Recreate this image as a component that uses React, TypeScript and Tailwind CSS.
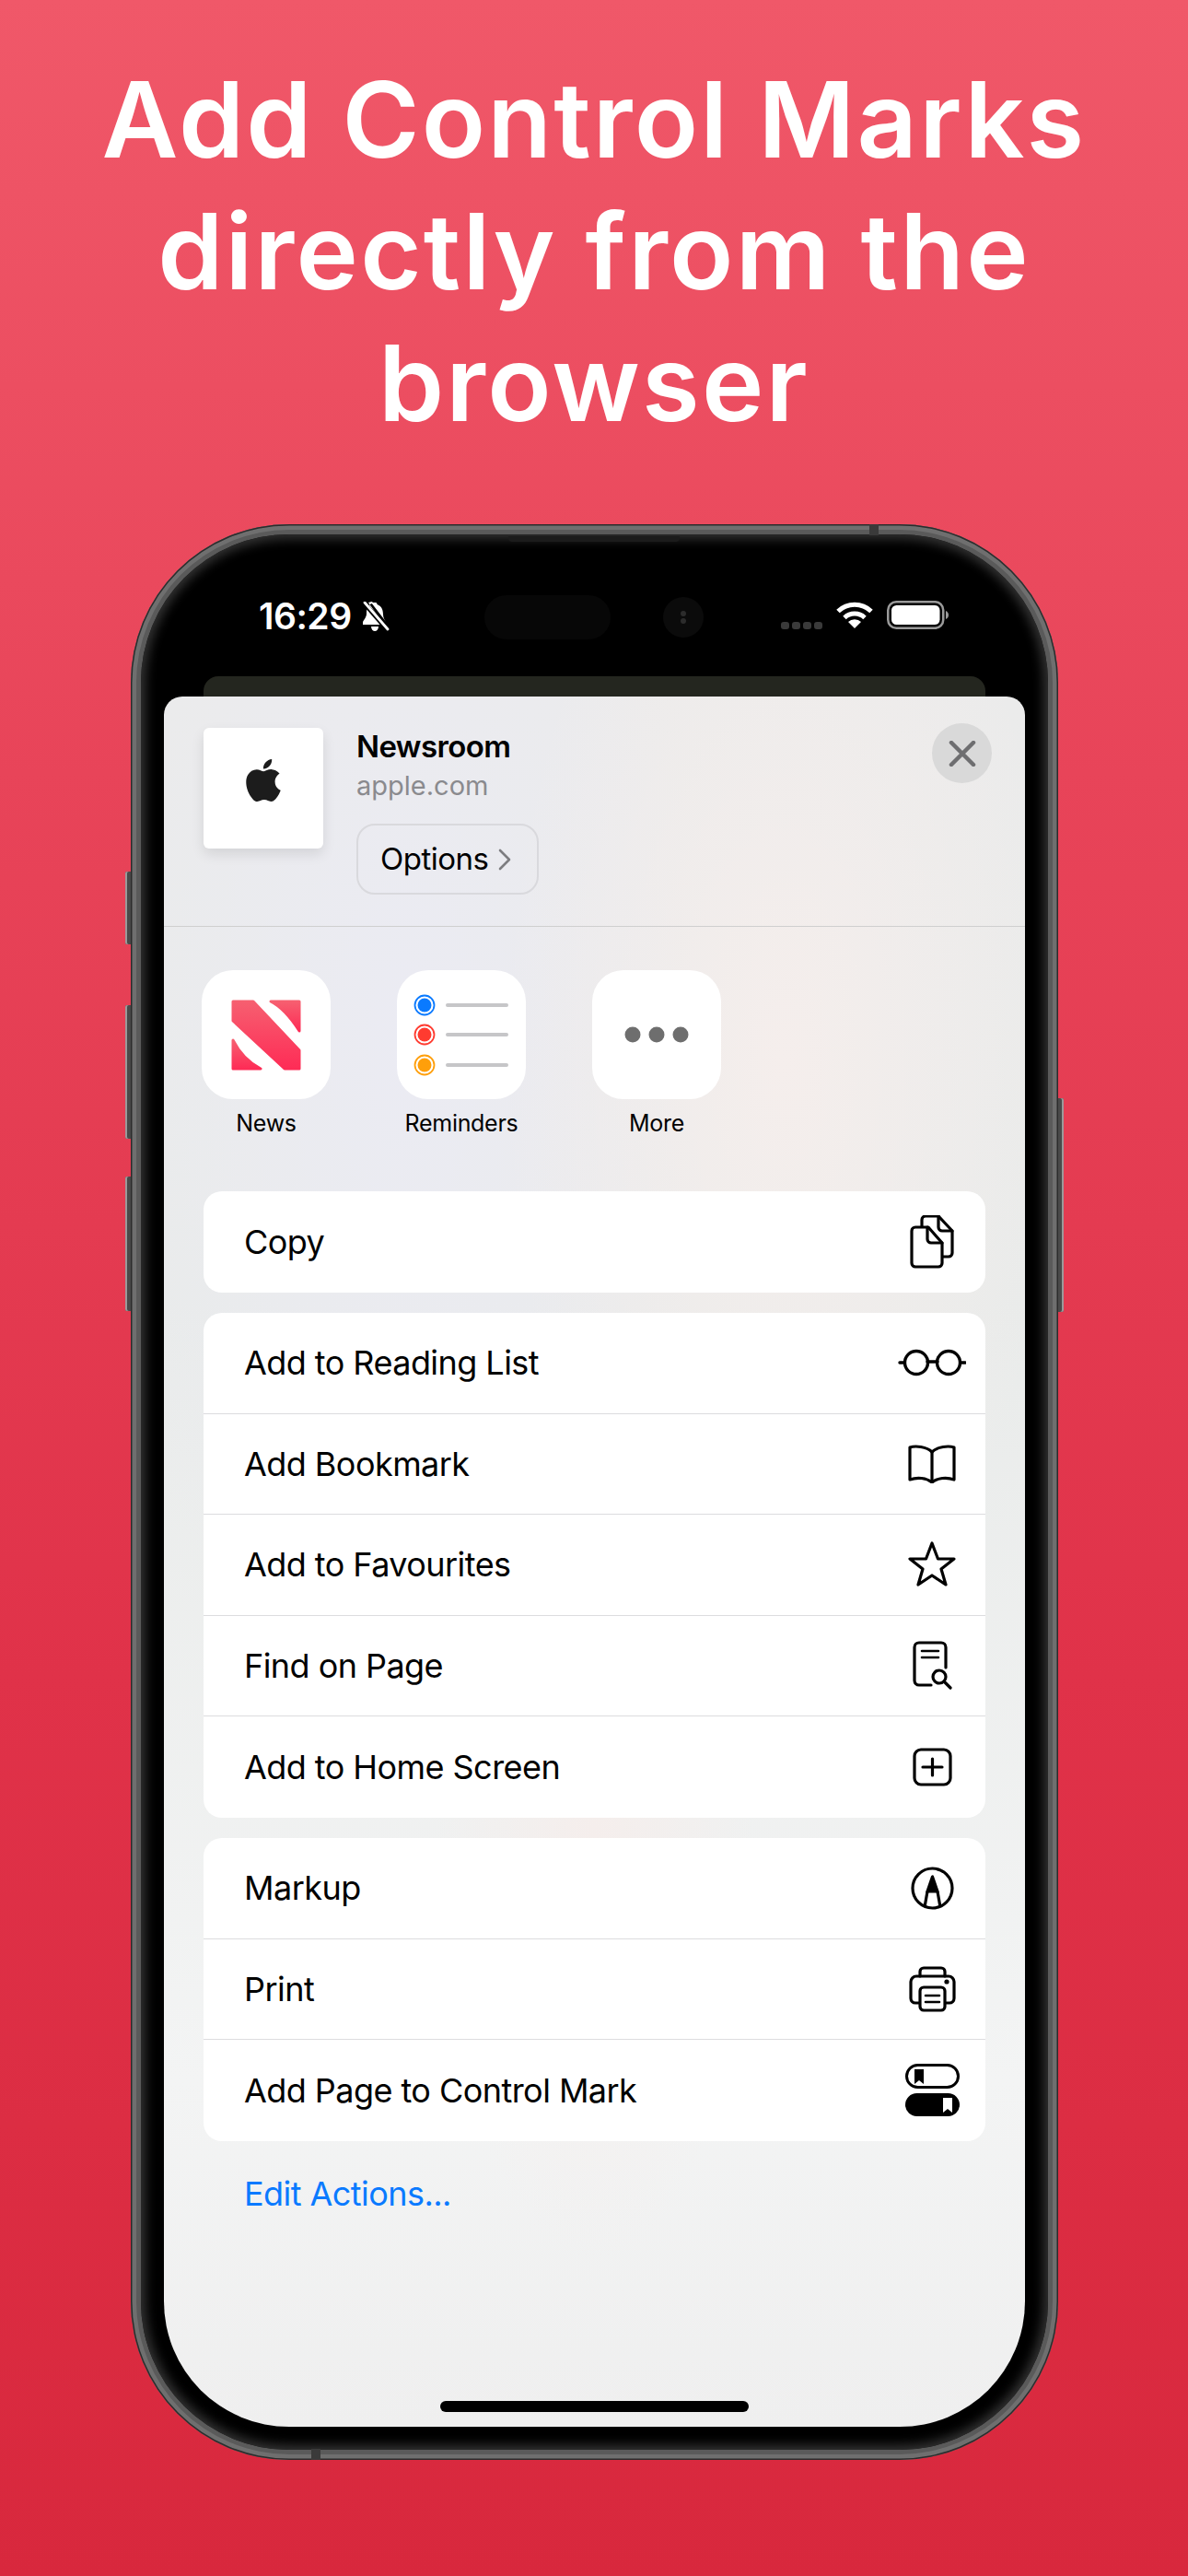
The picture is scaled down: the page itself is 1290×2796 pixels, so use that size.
import type { ReactNode } from "react";
import { SiApple } from "react-icons/si";

const CopyIcon = () => (
  <svg width="48" height="58" viewBox="0 0 48 58" fill="none" stroke="black" strokeWidth="3.2" strokeLinejoin="round" strokeLinecap="round">
    <path d="M13 12V5a4 4 0 0 1 4-4h14l15 16v24a4 4 0 0 1-4 4h-6" />
    <path d="M31 1v12a4 4 0 0 0 4 4h11" />
    <path d="M6 13h14l15 17v22a4 4 0 0 1-4 4H6a4 4 0 0 1-4-4V17a4 4 0 0 1 4-4Z" />
    <path d="M19 13v13a4 4 0 0 0 4 4h12" />
  </svg>
);

const GlassesIcon = () => (
  <svg width="74" height="30" viewBox="0 0 74 30" fill="none" stroke="black" strokeWidth="3.4" strokeLinecap="round">
    <ellipse cx="20" cy="15" rx="12.5" ry="12.5" />
    <ellipse cx="55" cy="15" rx="12.5" ry="12.5" />
    <path d="M32 14h11M2 15h5M68 15h5" />
  </svg>
);

const BookIcon = () => (
  <svg width="52" height="42" viewBox="0 0 52 42" fill="none" stroke="black" strokeWidth="3.2" strokeLinejoin="round">
    <path d="M26 8C20 2 8 1 2 3v35c8-3 18-2 24 3 6-5 16-6 24-3V3c-6-2-18-1-24 5Z" />
    <path d="M26 8v33" />
  </svg>
);

const StarIcon = () => (
  <svg width="52" height="50" viewBox="0 0 52 50" fill="none" stroke="black" strokeWidth="3.2" strokeLinejoin="round">
    <path d="M26 2l6.5 17H50L36 30l5 17-15-10-15 10 5-17L2 19h17.5Z" />
  </svg>
);

const FindIcon = () => (
  <svg width="43" height="53" viewBox="0 0 43 53" fill="none" stroke="black" strokeWidth="3.2" strokeLinecap="round">
    <path d="M36 29V7a5 5 0 0 0-5-5H7a5 5 0 0 0-5 5v36a5 5 0 0 0 5 5h13" />
    <path d="M10 11h18M10 18h18" strokeWidth="2.6" />
    <circle cx="29" cy="39" r="7" />
    <path d="M34.500 44.500 41 51" />
  </svg>
);

const PlusIcon = () => (
  <svg width="43" height="42" viewBox="0 0 43 42" fill="none" stroke="black" strokeWidth="3.2" strokeLinecap="round">
    <rect x="2" y="2" width="39" height="38" rx="7" />
    <path d="M21.500 12v18M11 21h21" />
  </svg>
);

const MarkupIcon = () => (
  <svg width="47" height="47" viewBox="0 0 47 47" fill="none" stroke="black" strokeWidth="3.2">
    <circle cx="23.500" cy="23.500" r="21.500" />
    <path d="M23.500 11 18 27h11Z" fill="black" strokeLinejoin="round" />
    <path d="M18 27l-3 17M29 27l3 17" />
  </svg>
);

const PrinterIcon = () => (
  <svg width="51" height="50" viewBox="0 0 51 50" fill="none" stroke="black" strokeWidth="3.2" strokeLinecap="round">
    <path d="M12 11V6a4 4 0 0 1 4-4h19a4 4 0 0 1 4 4v5" />
    <path d="M11 40H7a5 5 0 0 1-5-5V17a6 6 0 0 1 6-6h35a6 6 0 0 1 6 6v18a5 5 0 0 1-5 5h-4" />
    <rect x="12" y="23" width="27" height="25" rx="4" />
    <path d="M18 32h15M18 39h15" strokeWidth="2.6" />
    <circle cx="41" cy="17" r="2.600" fill="black" stroke="none" />
  </svg>
);

const ToggleIcon = () => (
  <svg width="59" height="57" viewBox="0 0 59 57">
    <rect x="1.500" y="1.500" width="56" height="24" rx="12" fill="none" stroke="black" strokeWidth="3" />
    <path d="M10 6h10v16l-5-4-5 4Z" fill="black" />
    <rect x="0" y="32" width="59" height="25" rx="12.500" fill="black" />
    <path d="M41 37h10v16l-5-4-5 4Z" fill="white" />
  </svg>
);

const NewsIcon = () => (
  <svg width="76" height="77" viewBox="0 0 76 77">
    <defs>
      <linearGradient id="newsPink" x1="0" y1="0" x2="0" y2="1">
        <stop offset="0%" stopColor="#f65f70" />
        <stop offset="100%" stopColor="#fe2c56" />
      </linearGradient>
    </defs>
    <g fill="url(#newsPink)" stroke="url(#newsPink)" strokeWidth="3" strokeLinejoin="round">
      <path d="M2 2h22l50 53v20H58L2 23Z" />
      <path d="M43 2h31v32C65 20 55 8 43 2Z" />
      <path d="M2 44c7 14 18 25 30 31H2Z" />
    </g>
  </svg>
);

const RemindersIcon = () => (
  <svg width="140" height="140" viewBox="0 0 140 140">
    {[
      { y: 38, color: "#0a7aff" },
      { y: 70, color: "#ff3b30" },
      { y: 103, color: "#ff9f0a" },
    ].map((item) => (
      <g key={item.y}>
        <circle cx="30" cy={item.y} r="10.500" fill="none" stroke={item.color} strokeWidth="1.800" />
        <circle cx="30" cy={item.y} r="7.500" fill={item.color} />
        <rect x="53" y={item.y - 2} width="68" height="4" rx="2" fill="#c6c6c8" />
      </g>
    ))}
  </svg>
);

const MoreIcon = () => (
  <svg width="70" height="18" viewBox="0 0 70 18" fill="#6e6e6e">
    <circle cx="9" cy="9" r="8.500" />
    <circle cx="35" cy="9" r="8.500" />
    <circle cx="61" cy="9" r="8.500" />
  </svg>
);

const BellOff = () => (
  <svg width="31" height="32" viewBox="0 0 31 32">
    <path d="M15 0c-2 0-3 1.500-3 3C7 5 6 9 6 14c0 4-3 7-4 9v3h23L8 2Z" fill="white" transform="translate(0 -1)" />
    <path d="M16 1c1 0 1.500 1 1.500 2C23 5 24 10 24 14c0 4 2 6 4 9l-17-22Z" fill="white" />
    <path d="M11 27h8c0 3-2 5-4 5s-4-2-4-5Z" fill="white" />
    <path d="M3 1l26 30" stroke="black" strokeWidth="5" />
    <path d="M4 1l25 29" stroke="white" strokeWidth="2.800" strokeLinecap="round" />
  </svg>
);

const WifiIcon = () => (
  <svg width="42" height="31" viewBox="0 0 42 31" fill="none" stroke="white" strokeWidth="5">
    <path d="M3 11.500a26 26 0 0 1 36 0" />
    <path d="M10 18.500a16 16 0 0 1 22 0" />
    <path d="M21 30l-7-7a10 10 0 0 1 14 0Z" fill="white" stroke="none" />
  </svg>
);

const BatteryIcon = () => (
  <svg width="67" height="31" viewBox="0 0 67 31">
    <rect x="1.250" y="1.250" width="60" height="28.500" rx="9" fill="none" stroke="#9a9a9a" strokeWidth="2.500" />
    <rect x="5" y="5" width="52.500" height="21" rx="5.500" fill="white" />
    <path d="M64 11c2 1 3 2.500 3 4.500S66 19 64 20Z" fill="#9a9a9a" />
  </svg>
);

const Row = ({ label, icon }: { label: string; icon: ReactNode }) => (
  <div className="flex h-[109.5px] items-center justify-between border-b-[1.5px] border-[#dcdcde] pl-[44px] pr-[18px] last:border-b-0">
    <span className="text-[36px] tracking-[-0.55px] text-black">{label}</span>
    <div className="flex w-[80px] items-center justify-center">{icon}</div>
  </div>
);

const Group = ({ rows }: { rows: { label: string; icon: ReactNode }[] }) => (
  <div className="overflow-hidden rounded-[20px] bg-white">
    {rows.map((row) => (
      <Row key={row.label} label={row.label} icon={row.icon} />
    ))}
  </div>
);

const apps = [
  { name: "News", icon: <NewsIcon /> },
  { name: "Reminders", icon: <RemindersIcon /> },
  { name: "More", icon: <MoreIcon /> },
];

export default function App() {
  return (
    <div className="h-[2796px] w-[1290px] overflow-hidden bg-[linear-gradient(180deg,#f05869_0%,#e84459_30%,#e03249_65%,#d8283d_100%)] font-['Inter',sans-serif]">
      <h1 className="px-[60px] pt-[58px] text-center text-[114px] font-semibold leading-[143px] tracking-[2.2px] text-white">
        Add Control Marks
        <br />
        directly from the
        <br />
        browser
      </h1>

      {/* phone frame */}
      <div className="relative ml-[142px] mt-[82px] h-[2101px] w-[1007px]">
        <div className="absolute left-[-6px] top-[377px] h-[79px] w-[8px] rounded-l-[2px] bg-[#4a4a4a] shadow-[inset_2px_0_0_#9a9a9a]" />
        <div className="absolute left-[-6px] top-[522px] h-[145px] w-[8px] rounded-l-[2px] bg-[#4a4a4a] shadow-[inset_2px_0_0_#9a9a9a]" />
        <div className="absolute left-[-6px] top-[708px] h-[146px] w-[8px] rounded-l-[2px] bg-[#4a4a4a] shadow-[inset_2px_0_0_#9a9a9a]" />
        <div className="absolute right-[-6px] top-[623px] h-[232px] w-[8px] rounded-r-[2px] bg-[#4a4a4a] shadow-[inset_-2px_0_0_#9a9a9a]" />

        <div className="relative h-full w-full rounded-[172px] bg-[#5a5a5a] p-[11px] shadow-[inset_0_0_0_1.5px_#2c2c2c,inset_0_0_0_6px_#6f6f6f]">
          <div className="absolute left-[410px] top-[13px] h-[6px] w-[186px] rounded-b-[4px] bg-[#1c1c1c]" />
          <div className="absolute left-[802px] top-0 h-[12px] w-[10px] bg-[#3a3a3a]" />
          <div className="absolute bottom-0 left-[196px] h-[12px] w-[10px] bg-[#3a3a3a]" />

          <div className="h-full w-full rounded-[161px] bg-black p-[25px] shadow-[inset_0_0_12px_5px_#333333]">
            {/* screen */}
            <div className="relative flex h-full w-full flex-col overflow-hidden rounded-[136px] bg-black">
              <div className="relative flex h-[151px] shrink-0 items-start text-white">
                <div className="ml-[103px] mt-[41px] flex items-center gap-[10px]">
                  <span className="text-[39px] font-semibold leading-[46px] tracking-[-0.5px]">16:29</span>
                  <BellOff />
                </div>
                <div className="absolute left-[348px] top-[41px] h-[48px] w-[137px] rounded-full bg-[#070707]" />
                <div className="absolute left-[542px] top-[43px] flex h-[44px] w-[44px] items-center justify-center rounded-full bg-[#0b0b0b]">
                  <div className="flex flex-col gap-[2px]">
                    <div className="h-[6px] w-[6px] rounded-full bg-[#2c2c2c]" />
                    <div className="h-[6px] w-[6px] rounded-full bg-[#2c2c2c]" />
                  </div>
                </div>
                <div className="absolute left-[670px] top-[47px] flex items-center gap-[14px]">
                  <div className="mt-[22px] flex gap-[3px]">
                    <div className="h-[8px] w-[9px] rounded-[3px] bg-[#3a3a3a]" />
                    <div className="h-[8px] w-[9px] rounded-[3px] bg-[#3a3a3a]" />
                    <div className="h-[8px] w-[9px] rounded-[3px] bg-[#3a3a3a]" />
                    <div className="h-[8px] w-[9px] rounded-[3px] bg-[#3a3a3a]" />
                  </div>
                  <WifiIcon />
                  <BatteryIcon />
                </div>
                <div className="absolute bottom-0 left-[43px] right-[43px] h-[22px] rounded-t-[16px] bg-[#24261f]" />
              </div>

              {/* share sheet */}
              <div className="relative flex-1 rounded-t-[20px] bg-[radial-gradient(ellipse_at_72%_21%,#f5eeec_0%,transparent_32%),radial-gradient(ellipse_at_28%_20%,#ebebf3_0%,transparent_36%),radial-gradient(ellipse_at_50%_66%,#f5eeec_0%,transparent_26%),linear-gradient(180deg,#ebebeb_0%,#e9ebea_35%,#f3f4f4_80%,#efefef_100%)]">
                <div className="flex h-[250px] items-start border-b-[1.5px] border-[#cfcfcf] pl-[43px] pt-[34px]">
                  <div className="flex h-[131px] w-[130px] items-center justify-center rounded-[6px] bg-white pb-[18px] shadow-[0_6px_14px_rgba(0,0,0,0.1)]">
                    <SiApple size={46} color="#1c1c1c" />
                  </div>
                  <div className="ml-[36px]">
                    <div className="text-[33px] font-semibold leading-[40px] tracking-[-0.6px] text-black">Newsroom</div>
                    <div className="mt-[3px] text-[29px] leading-[40px] text-[#8a8a8e]">apple.com</div>
                    <div className="mt-[21px] flex h-[77px] w-[198px] items-center gap-[10px] rounded-[20px] border-2 border-[#d9d9dd] pl-[24px]">
                      <span className="text-[33px] tracking-[-0.5px] text-black">Options</span>
                      <svg width="16" height="24" viewBox="0 0 16 24" fill="none" stroke="#7d7d80" strokeWidth="2.600" strokeLinecap="round" strokeLinejoin="round">
                        <path d="M3 2l10 10L3 22" />
                      </svg>
                    </div>
                  </div>
                  <div className="absolute left-[834px] top-[29px] flex h-[65px] w-[65px] items-center justify-center rounded-full bg-[#d9d9d9]">
                    <svg width="30" height="28" viewBox="0 0 30 28" fill="none" stroke="#6e6e70" strokeWidth="4.500" strokeLinecap="round">
                      <path d="M3 2l24 24M27 2L3 26" />
                    </svg>
                  </div>
                </div>

                <div className="ml-[41px] mt-[47px] flex gap-[72px]">
                  {apps.map((app) => (
                    <div key={app.name} className="flex w-[140px] flex-col items-center">
                      <div className="flex h-[140px] w-[140px] items-center justify-center rounded-[34px] bg-white">{app.icon}</div>
                      <span className="mt-[11px] whitespace-nowrap text-[25px] leading-[30px] tracking-[-0.3px] text-black">{app.name}</span>
                    </div>
                  ))}
                </div>

                <div className="ml-[43px] mr-[43px] mt-[59px] flex flex-col gap-[22.500px]">
                  <Group rows={[{ label: "Copy", icon: <CopyIcon /> }]} />
                  <Group
                    rows={[
                      { label: "Add to Reading List", icon: <GlassesIcon /> },
                      { label: "Add Bookmark", icon: <BookIcon /> },
                      { label: "Add to Favourites", icon: <StarIcon /> },
                      { label: "Find on Page", icon: <FindIcon /> },
                      { label: "Add to Home Screen", icon: <PlusIcon /> },
                    ]}
                  />
                  <Group
                    rows={[
                      { label: "Markup", icon: <MarkupIcon /> },
                      { label: "Print", icon: <PrinterIcon /> },
                      { label: "Add Page to Control Mark", icon: <ToggleIcon /> },
                    ]}
                  />
                </div>

                <div className="ml-[87px] mt-[35px] text-[36px] leading-[44px] tracking-[-0.55px] text-[#0a7aff]">Edit Actions...</div>

                <div className="absolute bottom-[16px] left-[300px] h-[12px] w-[335px] rounded-full bg-black" />
              </div>
            </div>
          </div>
        </div>
      </div>
    </div>
  );
}
